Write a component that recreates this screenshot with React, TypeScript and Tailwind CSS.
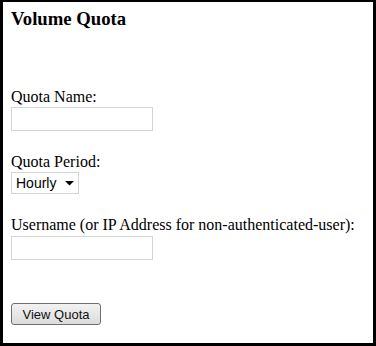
export default function App() {
  return (
    <div
      className="w-[376px] h-[346px] bg-white text-black border-black border-l-[3px] border-r-[3px] border-t-2 border-b-[3px] px-2 text-[16px] leading-[18px]"
      style={{ fontFamily: '"Liberation Serif", serif' }}
    >
      <h3 className="text-[18.72px] font-bold leading-[22px] mt-[6px]">Volume Quota</h3>

      <div className="mt-[58px]">
        <label className="block">Quota Name:</label>
        <input
          type="text"
          className="block mt-[1px] w-[142px] h-[24px] border border-[#d4d4d4] bg-white outline-none"
        />
      </div>

      <div className="mt-[22px]">
        <label className="block">Quota Period:</label>
        <div className="relative mt-[1px] w-[68px] h-[22px] border border-[#d4d4d4] bg-white flex items-center">
          <span
            className="pl-[4px] text-[14px]"
            style={{ fontFamily: '"Liberation Sans", sans-serif' }}
          >
            Hourly
          </span>
          <svg className="absolute right-[4px] top-[8px]" width="9" height="5" viewBox="0 0 9 5">
            <path d="M0 0 L9 0 L4.5 4.5 Z" fill="#000" />
          </svg>
        </div>
      </div>

      <div className="mt-[22px]">
        <label className="block">Username (or IP Address for non-authenticated-user):</label>
        <input
          type="text"
          className="block mt-[2px] w-[142px] h-[24px] border border-[#d4d4d4] bg-white outline-none"
        />
      </div>

      <button
        className="mt-[43px] w-[90px] h-[22px] border border-[#707070] rounded-[3px] bg-gradient-to-b from-[#f2f2f2] to-[#dcdcdc] text-[13px] leading-none text-[#111]"
        style={{ fontFamily: '"Liberation Sans", sans-serif' }}
      >
        View Quota
      </button>
    </div>
  );
}
